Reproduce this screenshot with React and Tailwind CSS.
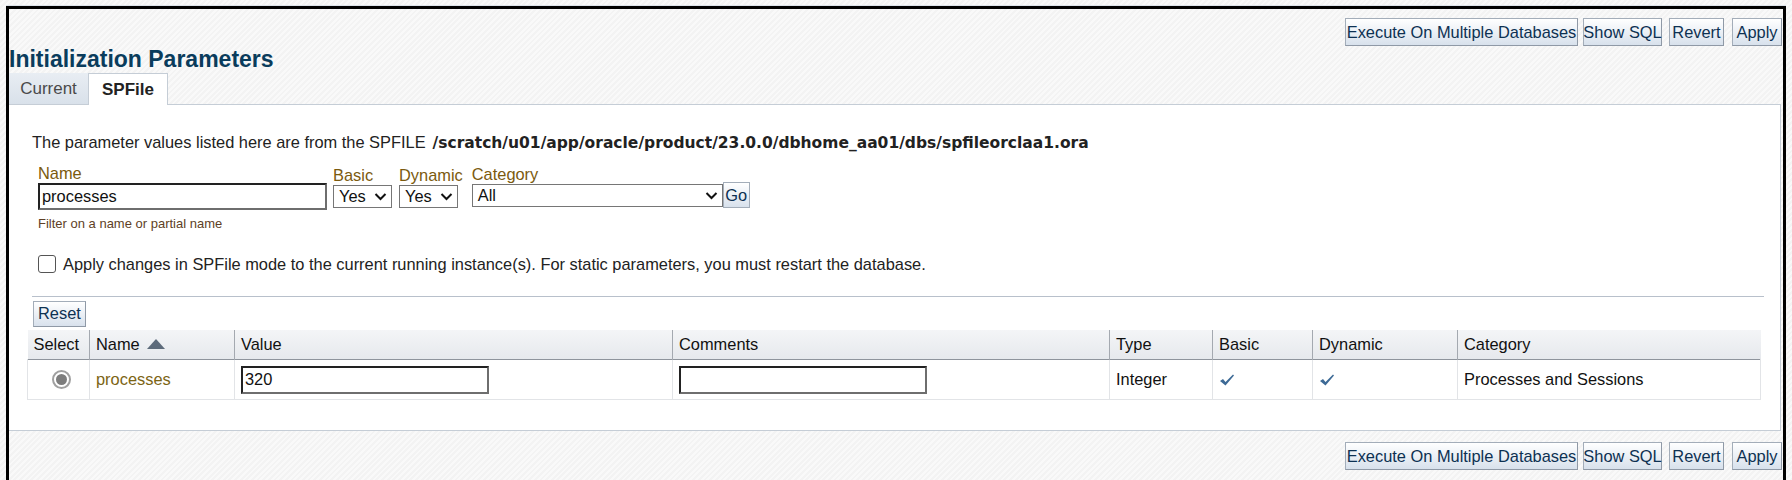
import { useState } from "react";

const font = { fontFamily: '"Liberation Sans", Arial, sans-serif' };

function Btn({ children, className = "" }) {
  return (
    <button className={"h-[28px] flex items-center justify-center border border-[#a3adb9] border-r-[#8f99a6] border-b-[#8f99a6] bg-linear-to-b from-[#ffffff] to-[#d8e1ec] text-[16.4px] text-[#0d3152] leading-none whitespace-nowrap " + className}>
      {children}
    </button>
  );
}

function ActionBar() {
  return (
    <div className="flex justify-end items-center pr-[1px]">
      <Btn className="w-[233px]">Execute On Multiple Databases</Btn>
      <Btn className="ml-[5px] w-[79px]">Show SQL</Btn>
      <Btn className="ml-[7px] w-[55px]">Revert</Btn>
      <Btn className="ml-[8px] w-[50px]">Apply</Btn>
    </div>
  );
}

function FakeSelect({ value, width }) {
  return (
    <div className={"h-[23px] border border-[#767676] bg-white flex items-center justify-between pl-[5px] pr-[4px] text-[16.4px] text-[#111] " + width}>
      <span>{value}</span>
      <svg width="13" height="9" viewBox="0 0 13 9">
        <path d="M1.5 2 L6.5 7 L11.5 2" fill="none" stroke="#111" strokeWidth="2" />
      </svg>
    </div>
  );
}

function Check() {
  return (
    <svg width="16" height="14" viewBox="0 0 16 14">
      <path d="M1 8 L4 6 L6.5 9 L14 1.5 L15 2.5 L6.5 12.5 Z" fill="#3d6a96" />
    </svg>
  );
}

export default function App() {
  const [value, setValue] = useState("320");
  const [comment, setComment] = useState("");
  const [name, setName] = useState("processes");

  const th = "h-[30px] text-left font-normal text-[16.4px] text-[#111] pl-[6px] border-l border-[#a4a9b0] first:border-l-0";
  const td = "h-[40px] text-[16.4px] pl-[6px] border-l border-b border-[#e2e4e7]";

  return (
    <div style={font} className="min-h-screen w-full bg-[repeating-linear-gradient(-45deg,#f3f3f3_0px,#f3f3f3_2px,#f9f9f9_2px,#f9f9f9_4px)] pt-[5px] px-[6px]">
      <div className="border-t border-[#dde3ea]">
        <div className="border-[3px] border-b-0 border-black pt-[9px]">
          <ActionBar />

          <h1 className="mt-[0px] text-[23px] leading-[26px] font-bold text-[#0a3c5c]">
            Initialization Parameters
          </h1>

          <div className="flex mt-[1px]">
            <div className="h-[32px] w-[79px] flex items-center justify-center bg-linear-to-b from-[#e8edf3] to-[#d9e1ea] border-b border-[#c5cdd6] text-[17px] text-[#4a4a4a]">
              Current
            </div>
            <div className="h-[32px] w-[80px] flex items-center justify-center bg-white border border-b-0 border-[#c5cdd6] text-[17px] font-bold text-[#222]">
              SPFile
            </div>
            <div className="flex-1 border-b border-[#c5cdd6] mr-[2px]" />
          </div>

          <div className="bg-white mr-[2px] border-r border-b border-[#c5cdd6] pl-[18px] pr-[16px] pt-[27px] pb-[30px]">
            <p className="ml-[5px] text-[16.4px] leading-[20px] text-[#222]">
              The parameter values listed here are from the SPFILE
              <span className="ml-[7px] font-bold text-[15.5px]" style={{ fontFamily: '"DejaVu Sans", Verdana, sans-serif' }}>
                /scratch/u01/app/oracle/product/23.0.0/dbhome_aa01/dbs/spfileorclaa1.ora
              </span>
            </p>

            <div className="ml-[11px] mt-[11px] flex items-end">
              <div className="flex flex-col">
                <span className="text-[16.4px] leading-[19px] text-[#7b5a0e]">Name</span>
                <input
                  value={name}
                  onChange={(e) => setName(e.target.value)}
                  className="w-[289px] h-[27px] px-[2px] text-[16.4px] text-[#111] bg-white border-2 border-t-[#222] border-l-[#222] border-r-[#6e6e6e] border-b-[#6e6e6e] outline-none"
                />
              </div>
              <div className="flex flex-col ml-[6px] mb-[2px]">
                <span className="text-[16.4px] leading-[19px] text-[#7b5a0e]">Basic</span>
                <FakeSelect value="Yes" width="w-[59px]" />
              </div>
              <div className="flex flex-col ml-[7px] mb-[2px]">
                <span className="text-[16.4px] leading-[19px] text-[#7b5a0e]">Dynamic</span>
                <FakeSelect value="Yes" width="w-[59px]" />
              </div>
              <div className="flex flex-col ml-[9px] mb-[2px]">
                <span className="text-[16.4px] leading-[19px] text-[#7b5a0e]">Category</span>
                <div className="flex">
                  <FakeSelect value="All" width="w-[251px]" />
                  <button className="h-[26px] -mt-[2px] w-[27px] flex items-center justify-center border border-[#a3adb9] bg-linear-to-b from-[#ffffff] to-[#d8e1ec] text-[16.4px] text-[#0d3152] leading-none">
                    Go
                  </button>
                </div>
              </div>
            </div>
            <p className="ml-[11px] mt-[6px] text-[13px] leading-[16px] text-[#5e3f26]">Filter on a name or partial name</p>

            <label className="ml-[11px] mt-[20px] flex items-center gap-[7px] text-[16.4px] text-[#222]">
              <span className="w-[18px] h-[18px] rounded-[3px] border border-[#555] bg-white" />
              Apply changes in SPFile mode to the current running instance(s). For static parameters, you must restart the database.
            </label>

            <div className="ml-[5px] mt-[19px] border-t border-[#b8c0cb]" />

            <div className="ml-[6px] mt-[4px]">
              <button className="h-[26px] px-[4px] border border-[#a3adb9] border-r-[#8f99a6] border-b-[#8f99a6] bg-linear-to-b from-[#ffffff] to-[#d8e1ec] text-[16.4px] text-[#0d3152] leading-none">
                Reset
              </button>
            </div>

            <table className="mt-[3px] w-[1733px] table-fixed border-collapse">
              <colgroup>
                <col className="w-[62px]" />
                <col className="w-[145px]" />
                <col className="w-[438px]" />
                <col className="w-[437px]" />
                <col className="w-[103px]" />
                <col className="w-[100px]" />
                <col className="w-[145px]" />
                <col className="w-[303px]" />
              </colgroup>
              <thead>
                <tr className="bg-linear-to-b from-[#f4f5f7] to-[#e6e9ed] border-b border-[#8e949c]">
                  <th className={th + " text-center pl-0"}>Select</th>
                  <th className={th}>
                    <span className="flex items-center gap-[7px]">
                      Name
                      <svg width="18" height="10" viewBox="0 0 18 10">
                        <path d="M0 10 L9 0 L18 10 Z" fill="#5d6b7b" />
                      </svg>
                    </span>
                  </th>
                  <th className={th}>Value</th>
                  <th className={th}>Comments</th>
                  <th className={th}>Type</th>
                  <th className={th}>Basic</th>
                  <th className={th}>Dynamic</th>
                  <th className={th}>Category</th>
                </tr>
              </thead>
              <tbody>
                <tr>
                  <td className={td + " pl-0"}>
                    <div className="flex justify-center">
                      <span className="w-[19px] h-[19px] rounded-full border-2 border-[#a0a0a0] bg-white flex items-center justify-center">
                        <span className="w-[11px] h-[11px] rounded-full bg-[#7d7d7d]" />
                      </span>
                    </div>
                  </td>
                  <td className={td + " text-[#7c6414]"}>processes</td>
                  <td className={td + " text-[#111]"}>
                    <input
                      value={value}
                      onChange={(e) => setValue(e.target.value)}
                      className="w-[248px] h-[28px] px-[2px] text-[16.4px] text-[#111] bg-white border-2 border-t-[#222] border-l-[#222] border-r-[#6e6e6e] border-b-[#6e6e6e] outline-none"
                    />
                  </td>
                  <td className={td}>
                    <input
                      value={comment}
                      onChange={(e) => setComment(e.target.value)}
                      className="w-[248px] h-[28px] px-[2px] text-[16.4px] text-[#111] bg-white border-2 border-t-[#222] border-l-[#222] border-r-[#6e6e6e] border-b-[#6e6e6e] outline-none"
                    />
                  </td>
                  <td className={td + " text-[#111]"}>Integer</td>
                  <td className={td}><Check /></td>
                  <td className={td}><Check /></td>
                  <td className={td + " text-[#111] border-r"}>Processes and Sessions</td>
                </tr>
              </tbody>
            </table>
          </div>

          <div className="pt-[11px] pb-[10px]">
            <ActionBar />
          </div>
        </div>
      </div>
    </div>
  );
}
